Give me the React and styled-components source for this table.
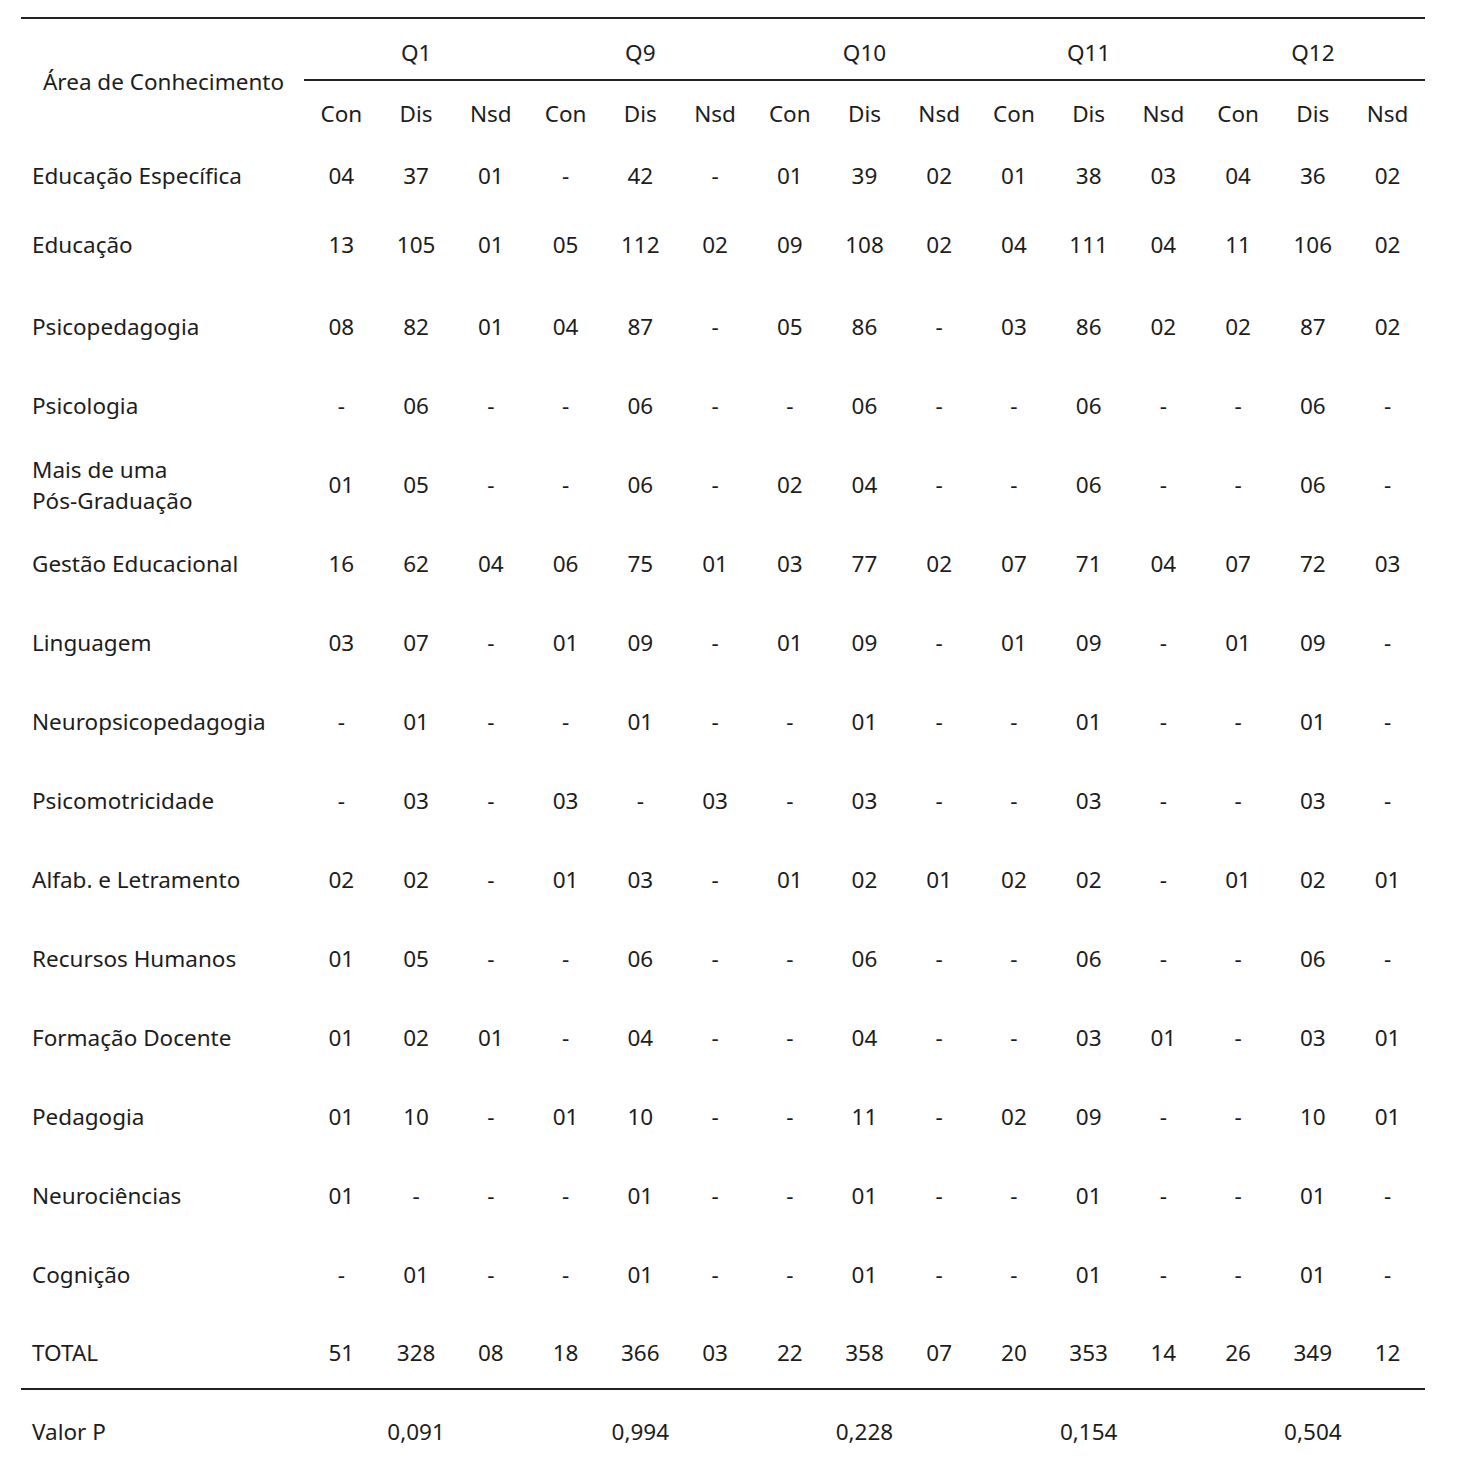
import React from "react";
import styled, { createGlobalStyle } from "styled-components";

const GlobalStyle = createGlobalStyle`
  html, body {
    margin: 0;
    padding: 0;
    background: #fff;
  }
  body {
    font-family: "Noto Sans", "Open Sans", sans-serif;
    color: #1d1d1d;
  }
`;

const groups = ["Q1", "Q9", "Q10", "Q11", "Q12"];
const subs = ["Con", "Dis", "Nsd"];

const rows = [
  { area: "Educação Específica", h: 62, vals: "04 37 01 - 42 - 01 39 02 01 38 03 04 36 02" },
  { area: "Educação", h: 80, pad: -2, vals: "13 105 01 05 112 02 09 108 02 04 111 04 11 106 02" },
  { area: "Psicopedagogia", h: 80, vals: "08 82 01 04 87 - 05 86 - 03 86 02 02 87 02" },
  { area: "Psicologia", vals: "- 06 - - 06 - - 06 - - 06 - - 06 -" },
  { area: ["Mais de uma", "Pós-Graduação"], vals: "01 05 - - 06 - 02 04 - - 06 - - 06 -" },
  { area: "Gestão Educacional", vals: "16 62 04 06 75 01 03 77 02 07 71 04 07 72 03" },
  { area: "Linguagem", vals: "03 07 - 01 09 - 01 09 - 01 09 - 01 09 -" },
  { area: "Neuropsicopedagogia", vals: "- 01 - - 01 - - 01 - - 01 - - 01 -" },
  { area: "Psicomotricidade", vals: "- 03 - 03 - 03 - 03 - - 03 - - 03 -" },
  { area: "Alfab. e Letramento", vals: "02 02 - 01 03 - 01 02 01 02 02 - 01 02 01" },
  { area: "Recursos Humanos", vals: "01 05 - - 06 - - 06 - - 06 - - 06 -" },
  { area: "Formação Docente", vals: "01 02 01 - 04 - - 04 - - 03 01 - 03 01" },
  { area: "Pedagogia", vals: "01 10 - 01 10 - - 11 - 02 09 - - 10 01" },
  { area: "Neurociências", vals: "01 - - - 01 - - 01 - - 01 - - 01 -" },
  { area: "Cognição", vals: "- 01 - - 01 - - 01 - - 01 - - 01 -" },
];

const total = "51 328 08 18 366 03 22 358 07 20 353 14 26 349 12";
const pValues = ["0,091", "0,994", "0,228", "0,154", "0,504"];

const Page = styled.div`
  padding: 17px 33px 0 21px;
`;

const Table = styled.table`
  width: 1404px;
  border-collapse: collapse;
  table-layout: fixed;
  font-size: 22.5px;
  line-height: 31px;
  border-top: 2px solid #222;
`;

const AreaCol = styled.col`
  width: 283px;
`;

const DataCol = styled.col`
  width: 74.73px;
`;

const GroupRow = styled.tr`
  height: 62px;
`;

const GroupHead = styled.th`
  font-weight: 400;
  text-align: center;
  vertical-align: middle;
  padding: 6px 0 0;
  border-bottom: 2px solid #222;
`;

const AreaHead = styled.th`
  font-weight: 400;
  text-align: center;
  vertical-align: middle;
  padding: 0 0 0 2px;
`;

const SubRow = styled.tr`
  height: 64px;
`;

const SubHead = styled.th`
  font-weight: 400;
  text-align: center;
  vertical-align: middle;
  padding: 2px 0 0;
`;

const BodyRow = styled.tr`
  height: ${(p) => p.$h || 79}px;

  td {
    padding-bottom: ${(p) => (p.$pad ? -p.$pad * 2 : 0)}px;
  }
`;

const AreaCell = styled.td`
  text-align: left;
  vertical-align: middle;
  padding: 0 0 0 11px;
  white-space: nowrap;
`;

const Cell = styled.td`
  text-align: center;
  vertical-align: middle;
  padding: 0;
`;

const TotalRow = styled.tr`
  height: 75px;

  td {
    padding-top: 3px;
    border-bottom: 2px solid #222;
  }
`;

const PRow = styled.tr`
  height: 84px;
`;

const App = () => {
  return (
    <>
      <GlobalStyle />
      <Page>
        <Table>
          <colgroup>
            <AreaCol />
            {Array.from({ length: 15 }).map((_, i) => (
              <DataCol key={i} />
            ))}
          </colgroup>
          <thead>
            <GroupRow>
              <AreaHead rowSpan={2}>Área de Conhecimento</AreaHead>
              {groups.map((g) => (
                <GroupHead key={g} colSpan={3}>
                  {g}
                </GroupHead>
              ))}
            </GroupRow>
            <SubRow>
              {groups.map((g) =>
                subs.map((s) => <SubHead key={g + s}>{s}</SubHead>)
              )}
            </SubRow>
          </thead>
          <tbody>
            {rows.map((row, i) => (
              <BodyRow key={i} $h={row.h} $pad={row.pad}>
                <AreaCell>
                  {Array.isArray(row.area) ? (
                    <>
                      {row.area[0]}
                      <br />
                      {row.area[1]}
                    </>
                  ) : (
                    row.area
                  )}
                </AreaCell>
                {row.vals.split(" ").map((v, j) => (
                  <Cell key={j}>{v}</Cell>
                ))}
              </BodyRow>
            ))}
            <TotalRow>
              <AreaCell>TOTAL</AreaCell>
              {total.split(" ").map((v, j) => (
                <Cell key={j}>{v}</Cell>
              ))}
            </TotalRow>
            <PRow>
              <AreaCell>Valor P</AreaCell>
              {pValues.map((v) => (
                <Cell key={v} colSpan={3}>
                  {v}
                </Cell>
              ))}
            </PRow>
          </tbody>
        </Table>
      </Page>
    </>
  );
};

export default App;
